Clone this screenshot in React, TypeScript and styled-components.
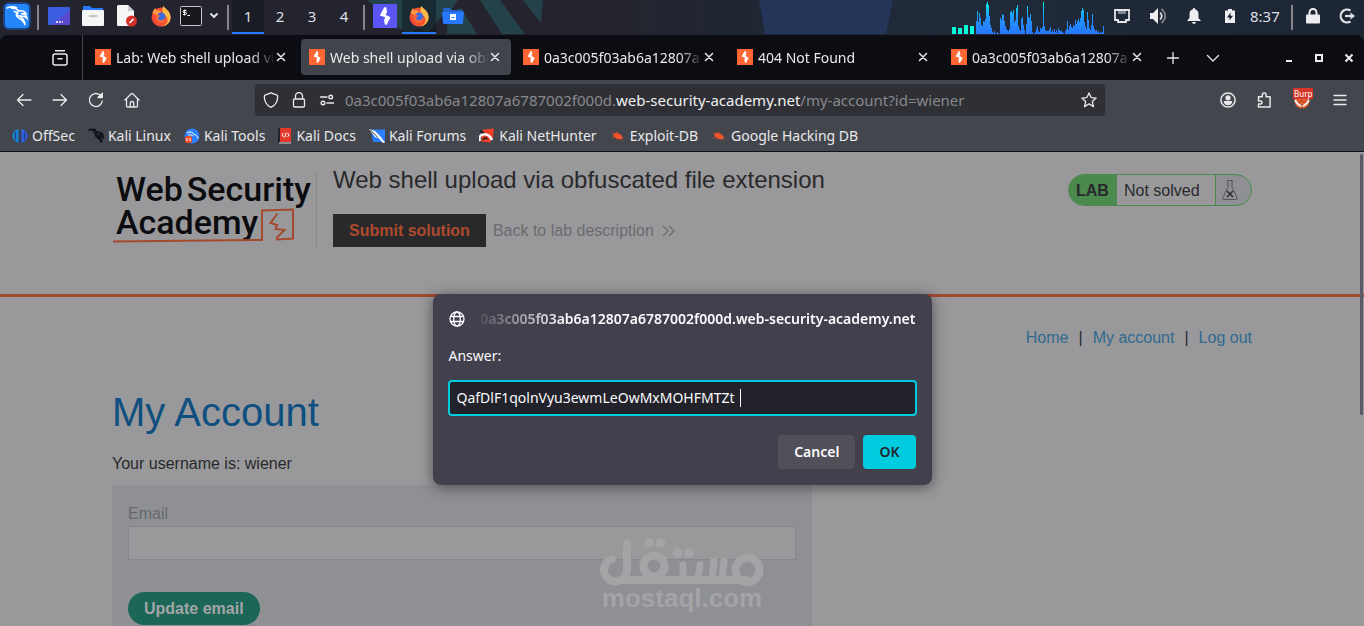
import React from "react";
import styled, { createGlobalStyle } from "styled-components";

const UI_FONT = '"Noto Sans", "DejaVu Sans", sans-serif';
const PAGE_FONT = '"Liberation Sans", Arial, sans-serif';

const GlobalStyle = createGlobalStyle`
  *, *::before, *::after { box-sizing: border-box; }
  body { margin: 0; background: #0c0d12; font-family: ${UI_FONT}; }
  button, input { font: inherit; }
  button { border: 0; padding: 0; background: none; color: inherit; }
  a { color: inherit; text-decoration: none; }
  h1, h2, p { margin: 0; font-weight: 400; }
  svg { display: block; flex: none; }
`;

const Desktop = styled.div`
  display: flex;
  flex-direction: column;
  height: 100vh;
  overflow: hidden;
  background: #1e2733;
`;

/* ---------- desktop panel ---------- */

const Panel = styled.header`
  position: relative;
  flex: none;
  display: flex;
  justify-content: space-between;
  height: 35px;
  padding-bottom: 1px;
  overflow: hidden;
  background: linear-gradient(90deg, #23242e 0%, #25242e 44%, #1e2733 56%, #202a3a 68%, #1d2634 100%);
`;

const Wallpaper = styled.svg`
  position: absolute;
  top: 0;
  left: 0;
`;

const PanelGroup = styled.div`
  position: relative;
  display: flex;
  align-items: stretch;
`;

const PanelButton = styled.button<{ $w?: number; $active?: boolean; $start?: boolean }>`
  display: flex;
  align-items: center;
  justify-content: ${(p) => (p.$start ? "flex-start" : "center")};
  width: ${(p) => p.$w ?? 34}px;
  padding: 0 2px;
  font-size: 15px;
  line-height: 20px;
  color: #dcdfe4;
  background: ${(p) => (p.$active ? "rgba(16, 20, 26, 0.5)" : "none")};
  border-bottom: 2px solid ${(p) => (p.$active ? "#2777ff" : "transparent")};
`;

const PanelSeparator = styled.span`
  width: 2px;
  height: 25px;
  margin: 5px 3px;
  background: #85868b;
`;

const Graph = styled.svg`
  align-self: flex-end;
`;

/* ---------- browser chrome ---------- */

const Browser = styled.div`
  flex: 1;
  min-height: 0;
  display: flex;
  flex-direction: column;
  overflow: hidden;
  border-radius: 8px 8px 0 0;
  background: #0c0d12;
  color: #e9e9eb;
  font-size: 14px;
  line-height: 20px;
`;

const TabBar = styled.div`
  flex: none;
  display: flex;
  align-items: stretch;
  height: 45px;
`;

const ViewButton = styled.button`
  display: flex;
  align-items: center;
  justify-content: flex-end;
  width: 83px;
  padding-right: 14px;
  border-right: 1px solid #45464b;
`;

const Tabs = styled.div`
  display: flex;
  gap: 4px;
  padding: 4px 4px 5px;
`;

const Tab = styled.div<{ $active?: boolean }>`
  display: flex;
  align-items: center;
  width: 210px;
  padding: 0 10px 0 8px;
  border-radius: 4px;
  background: ${(p) => (p.$active ? "#42444c" : "none")};
`;

const TabTitle = styled.span`
  flex: 1;
  min-width: 0;
  margin-left: 5px;
  padding-top: 2px;
  overflow: hidden;
  white-space: nowrap;
  mask-image: linear-gradient(90deg, #000 calc(100% - 24px), transparent);
`;

const IconButton = styled.button<{ $w: number }>`
  display: flex;
  flex: none;
  align-items: center;
  justify-content: center;
  width: ${(p) => p.$w}px;
`;

const WindowControls = styled.div`
  display: flex;
  margin-left: auto;
`;

const NavBar = styled.div`
  flex: none;
  display: flex;
  align-items: center;
  height: 40px;
  padding: 0 6px;
  background: #43464d;
`;

const NavGroup = styled.div<{ $end?: boolean }>`
  display: flex;
  flex: ${(p) => (p.$end ? "0 0 253px" : "0 0 249px")};
  justify-content: ${(p) => (p.$end ? "flex-end" : "flex-start")};
`;

const UrlBar = styled.div`
  flex: 1;
  min-width: 0;
  display: flex;
  align-items: center;
  height: 32px;
  padding: 0 2px;
  border-radius: 4px;
  background: #2f3035;
`;

const UrlText = styled.div`
  flex: 1;
  min-width: 0;
  padding-left: 4px;
  overflow: hidden;
  white-space: nowrap;
  font-size: 15px;
  color: #88898d;

  b { font-weight: 400; color: #f0f0f2; }
`;

const Bookmarks = styled.nav`
  flex: none;
  display: flex;
  align-items: center;
  gap: 13px;
  height: 32px;
  padding: 1px 12px 0;
  background: #43464d;
  border-bottom: 1px solid #101116;
`;

const Bookmark = styled.a`
  display: flex;
  align-items: center;
  gap: 4px;
  white-space: nowrap;
`;

/* ---------- web page ---------- */

const Viewport = styled.div`
  position: relative;
  flex: 1;
  min-height: 0;
  overflow: hidden;
  background: #99999b;
  color: #29292c;
  font-family: ${PAGE_FONT};
  font-size: 16px;
  line-height: 20px;
`;

const ScrollThumb = styled.span`
  position: absolute;
  top: 2px;
  right: 1px;
  width: 3px;
  height: 55%;
  border-radius: 2px;
  background: #5b5965;
`;

const Container = styled.div`
  max-width: 1140px;
  margin: 0 auto;
`;

const LabHeader = styled.div`
  height: 145px;
  border-bottom: 3px solid #a44a2e;

  ${Container} { display: flex; align-items: flex-start; }
`;

const Brand = styled.a`
  display: block;
  position: relative;
  width: 205px;
  height: 75px;
  margin-top: 21px;
  padding: 0 4px;
  border-right: 1px solid #88888b;
  color: #0c0c10;
  font-family: Roboto, sans-serif;
  font-weight: 500;
  font-size: 34px;
  line-height: 33px;
`;

const BrandLine = styled.span`
  display: flex;
  gap: 4px;
`;

const BrandMark = styled.svg`
  position: absolute;
  left: 0;
  top: 33px;
`;

const LabInfo = styled.div`
  flex: 1;
  margin: 14px 0 0 16px;
`;

const LabTitle = styled.h2`
  font-size: 24px;
  line-height: 28px;
`;

const LabActions = styled.div`
  display: flex;
  align-items: center;
  gap: 7px;
  margin-top: 20px;
`;

const SubmitButton = styled.button`
  height: 33px;
  padding: 0 16px;
  background: #29292b;
  color: #ad4a2e;
  font-weight: 700;
`;

const BackLink = styled.a`
  display: flex;
  align-items: center;
  gap: 8px;
  color: #6b6b6e;
`;

const LabStatus = styled.div`
  display: flex;
  align-items: stretch;
  width: 184px;
  height: 32px;
  margin-top: 22px;
  overflow: hidden;
  border: 1px solid #4b8a4c;
  border-radius: 16px;
  background: #8e9094;

  strong {
    width: 48px;
    padding: 6px 0 0 7px;
    background: #4b8a4c;
  }
  span {
    flex: 1;
    padding: 6px 0 0 7px;
    background: #99999b;
    border-right: 1px solid #4b8a4c;
  }
  svg { margin: 5px 13px 0 6px; }
`;

const PageNav = styled.nav`
  display: flex;
  justify-content: flex-end;
  gap: 10px;
  padding-top: 31px;

  a { color: #2f6a90; }
`;

const PageTitle = styled.h1`
  margin-top: 40px;
  color: #0f4f80;
  font-size: 40px;
  line-height: 48px;
`;

const Username = styled.p`
  margin-top: 18px;
`;

const EmailForm = styled.form`
  display: flex;
  flex-direction: column;
  align-items: flex-start;
  max-width: 700px;
  margin-top: 11px;
  padding: 19px 16px 32px;
  background: #8e9094;

  label { color: #68696d; }
  input {
    width: 100%;
    height: 34px;
    margin: 2px 0 32px;
    padding: 0 8px;
    border: 1px solid #87888b;
    background: #99999b;
    outline: none;
  }
`;

const UpdateButton = styled.button`
  height: 33px;
  padding: 0 16px;
  border-radius: 17px;
  background: #1b6657;
  color: #a3a5a6;
  font-weight: 700;
`;

const Watermark = styled.div`
  position: absolute;
  left: 0;
  right: 0;
  bottom: 16px;
  display: flex;
  flex-direction: column;
  align-items: center;
  color: #a4a4a7;
  font-weight: 700;
  font-size: 26px;
  line-height: 24px;
  pointer-events: none;
`;

/* ---------- prompt dialog ---------- */

const DialogLayer = styled.div`
  position: absolute;
  inset: 0;
  display: flex;
  align-items: flex-start;
  justify-content: center;
  padding-top: 142px;
`;

const Dialog = styled.form`
  width: 499px;
  max-width: 90%;
  padding: 16px;
  border-radius: 8px;
  background: #42404c;
  box-shadow: 0 2px 14px rgba(20, 20, 26, 0.55);
  color: #fbfbfe;
  font-family: ${UI_FONT};
  font-size: 14px;
  line-height: 18px;
`;

const DialogOrigin = styled.div`
  display: flex;
  align-items: center;
  gap: 6px;
  font-weight: 600;
`;

const OriginText = styled.span`
  flex: 1;
  min-width: 0;
  display: flex;
  justify-content: flex-end;
  overflow: hidden;
  white-space: nowrap;
  mask-image: linear-gradient(90deg, transparent, #000 96px);
`;

const DialogLabel = styled.label`
  display: block;
  margin-top: 19px;
`;

const Field = styled.div`
  position: relative;
  margin: 15px -1px 19px;
`;

const DialogInput = styled.input`
  display: block;
  width: 100%;
  height: 36px;
  padding: 0 7px 2px;
  border: 2px solid #00ccdf;
  border-radius: 4px;
  outline: none;
  background: #22222a;
  color: #fbfbfe;
  caret-color: transparent;
`;

const Caret = styled.span`
  position: absolute;
  top: 9px;
  left: 292px;
  width: 1px;
  height: 18px;
  background: #fbfbfe;
`;

const DialogActions = styled.div`
  display: flex;
  justify-content: flex-end;
  gap: 8px;
`;

const DialogButton = styled.button<{ $primary?: boolean }>`
  height: 34px;
  padding: 0 16px;
  border-radius: 4px;
  background: ${(p) => (p.$primary ? "#00ccdf" : "#514f58")};
  color: ${(p) => (p.$primary ? "#24242e" : "#fbfbfe")};
  font-weight: 600;
`;

/* ---------- drawings ---------- */

const line = {
  fill: "none",
  stroke: "currentColor",
  strokeWidth: 1.3,
  strokeLinecap: "round" as const,
  strokeLinejoin: "round" as const,
};

const BurpIcon = ({ size = 16, color = "#ff6633" }) => (
  <svg width={size} height={size} viewBox="0 0 16 16">
    <rect width="16" height="16" fill={color} />
    <path d="M8.800 2.200H7.500L4.600 7.600l3.600 1.200-.8 1.800.5 3.200h1.200l2.600-5-3.300-1.700 1-1.800z" fill="#fff" />
  </svg>
);

const CloseIcon = () => (
  <svg width="12" height="12" viewBox="0 0 12 12" {...line} strokeWidth={1.5}>
    <path d="M2.500 2.500l7 7M9.500 2.500l-7 7" />
  </svg>
);

const FirefoxIcon = () => (
  <svg width="22" height="22" viewBox="0 0 22 22">
    <circle cx="11" cy="12" r="9.4" fill="#f4502f" />
    <path d="M13.5.8c.8 3 6.800 4.600 7.200 11.200.2 5-4 9.400-9.200 9.400 4.800-1 7-4.600 5.600-8.400-.8-2.400-4-3.500-4.600-6.600-.3-2 .1-4.200 1-5.600z" fill="#ffb84a" />
    <path d="M2.600 8C3 5.600 4.200 4 5.400 3c0 1 .4 1.800 1 2.400 2-.5 3.400.1 4.600 1.200L9 9.600 6 10z" fill="#ff9640" />
    <circle cx="11.200" cy="11.800" r="4.200" fill="#3a6be0" />
    <path d="M6 10.200c2-.6 3.400-.2 4.600.6-1.200 1-2 1-2.400 2-.4 1.600 1.600 3 4 2.200 1.400-.4 2.200-1.200 3-2-.2 3.400-2.600 5-5 4.800-3.400-.3-5-4-4.200-7.600z" fill="#ff6a38" />
    <path d="M1.800 11.500c.4 5 4 9.700 9.400 9.900-5 .4-9.400-4-9.600-8z" fill="#c92c57" />
  </svg>
);

const DragonPath =
  "M1 3c3-1.500 7-1.600 10 0-2.500-.4-4.500-.2-6 .3 3-.2 6 .5 8 2.700M13 6c2.600-.6 5.600.3 7 2.500-1.700-.6-3-.4-4 .2 2.300.4 4.500 2 5 4.600-2-2.200-5-2.600-7.400-2.300-3-.1-4.200-2.600-.6-5M8 6.500c1.500 0 3 .6 4 1.700M13.500 11c2 1.500 5.500 3 5.500 9-1-4-3.500-5.400-6-6.800-2-1.200-3.200-3.200-2.400-5.600";

const KaliMenuIcon = () => (
  <svg width="30" height="30" viewBox="0 0 30 30">
    <rect x="1" y="1" width="28" height="28" rx="6" fill="#1a5cc8" opacity=".55" />
    <rect x="3" y="3" width="24" height="24" rx="4" fill="#2387fb" />
    <path d={DragonPath} transform="translate(4 4)" fill="none" stroke="#fff" strokeWidth="1.500" strokeLinecap="round" />
  </svg>
);

const Dragon = ({ color, size = 16 }: { color: string; size?: number }) => (
  <svg width={size} height={size} viewBox="0 0 22 22">
    <path d={DragonPath} fill="none" stroke={color} strokeWidth="2" strokeLinecap="round" />
  </svg>
);

const TerminalIcon = () => (
  <svg width="22" height="20" viewBox="0 0 22 20">
    <rect x=".5" y=".5" width="21" height="19" rx="1" fill="#16171a" stroke="#c8c9cc" />
    <path d="M6.500 4.500H4q-1 0-1 1t1 1h1.500q1 0 1 1t-1 1H3M4.700 3.500v6M7.500 9.500H10" fill="none" stroke="#fff" />
  </svg>
);

const bigBars = [7, 6, 9, 8];
const smallBars = [
  13, 23, 12, 21, 16, 9, 8, 13, 12, 15, 30, 32, 29, 18, 9, 6, 2, 1, 3, 1, 0, 2, 1, 0, 16, 14, 20, 19, 13, 8, 5, 4, 3,
  5, 22, 23, 21, 24, 12, 14, 26, 29, 8, 5, 3, 15, 17, 9, 4, 0, 10, 28, 17, 16, 20, 13, 2, 0, 1, 2, 5, 8, 3, 2, 6, 5,
  7, 32, 8, 4, 3, 3, 3, 5, 7, 2, 4, 2, 5, 2, 4, 1, 6, 4, 3, 3, 2, 1, 0, 3, 5, 13, 4, 8, 10, 7, 6, 9, 8, 14, 10, 13,
  15, 12, 16, 23, 26, 24, 12, 8, 5, 22, 14, 6, 4, 9, 20, 8, 5, 3, 4, 2, 3, 1, 2, 1, 2, 8,
];

const CpuGraph = () => (
  <Graph width="154" height="34" viewBox="0 0 154 34">
    <defs>
      <linearGradient id="load" x1="0" y1="0" x2="0" y2="34" gradientUnits="userSpaceOnUse">
        <stop offset="0" stopColor="#00ffd8" />
        <stop offset=".5" stopColor="#2296ff" />
        <stop offset="1" stopColor="#2777ff" />
      </linearGradient>
    </defs>
    {bigBars.map((h, i) => (
      <rect key={i} x={2 + i * 6} y={34 - h} width="4" height={h} fill="#00ffd8" />
    ))}
    <path d={smallBars.map((h, i) => `M${26 + i} 34v${-h}h1v${h}z`).join("")} fill="url(#load)" />
  </Graph>
);

const labHost = "0a3c005f03ab6a12807a6787002f000d";

const tabs = [
  { title: "Lab: Web shell upload vi" },
  { title: "Web shell upload via obf", active: true },
  { title: "0a3c005f03ab6a12807a" },
  { title: "404 Not Found" },
  { title: "0a3c005f03ab6a12807a" },
];

const ExploitIcon = () => (
  <svg width="16" height="16" viewBox="0 0 16 16">
    <path d="M3 6l3.500-1.500 4 2 2.500 3-1.500 2-4-.5L4 9z" fill="#f4552c" />
    <path d="M2 4.500l3 1.500M8 3.500v2M1.500 10l3-1M6 12l1-1M12 6l-1 1M14 8.500L13 9.500M13 12l1 1" stroke="#a8432b" fill="none" />
  </svg>
);

const bookmarks = [
  {
    name: "OffSec",
    icon: (
      <svg width="16" height="16" viewBox="0 0 16 16">
        <path d="M6.500 1v14C2.500 13.500.5 11 .5 8s2-6 6-7z" fill="#1784d4" />
        <path d="M9.500 1v14c4-1.500 6-4 6-7s-2-6-6-7z" fill="#2f62e6" />
        <path d="M3.500 4v8M8 3v12M12.500 4v8" stroke="#283a78" strokeWidth="1.200" />
      </svg>
    ),
  },
  { name: "Kali Linux", icon: <Dragon color="#101116" /> },
  {
    name: "Kali Tools",
    icon: (
      <svg width="16" height="16" viewBox="0 0 16 16">
        <circle cx="8" cy="8" r="7.500" fill="#2a7fff" />
        <path d="M3 4.500c4-1 6 0 7 2 2 0 3.500 1.500 4 4M4 7c2-.5 4 0 5 1" fill="none" stroke="#fff" />
        <rect x="1" y="8" width="7" height="7" rx="2" fill="#ee4d2e" />
        <path d="M3 10v3M6 10v3" stroke="#fff" />
      </svg>
    ),
  },
  {
    name: "Kali Docs",
    icon: (
      <svg width="14" height="16" viewBox="0 0 14 16">
        <rect width="2" height="15" fill="#20242e" />
        <rect x="2" width="11" height="14" fill="#e5382c" />
        <path d="M5.500 5L4 7l1.500 2M9.500 5L11 7 9.500 9M8.200 4.500l-1.400 5" fill="none" stroke="#fff" />
        <path d="M1 15h12" stroke="#d8d8da" />
      </svg>
    ),
  },
  {
    name: "Kali Forums",
    icon: (
      <svg width="16" height="16" viewBox="0 0 16 16">
        <path d="M2 1.500h14V14H4z" fill="#2a7fff" />
        <path d="M0 1l6 2 5 5 5 6.500-2 .5-4.500-5L6 9z" fill="#fff" />
        <path d="M1.500 2l7 7" stroke="#333" />
      </svg>
    ),
  },
  {
    name: "Kali NetHunter",
    icon: (
      <svg width="16" height="16" viewBox="0 0 16 16">
        <path d="M4 1.500l11-1-1 9-3 5-9-1z" fill="#ee3f2b" />
        <path d="M1 13c-1.500-3 0-6 3-6.500C8 5.800 11 8 13 12" fill="none" stroke="#fff" strokeWidth="2.500" />
        <path d="M4 12c1-2.500 3-2.500 4.500-1M1 3l4 2" fill="none" stroke="#1b1c20" strokeWidth="1.500" />
      </svg>
    ),
  },
  { name: "Exploit-DB", icon: <ExploitIcon /> },
  { name: "Google Hacking DB", icon: <ExploitIcon /> },
];

export default function App() {
  return (
    <Desktop>
      <GlobalStyle />
      <Panel>
        <Wallpaper width="1364" height="34" viewBox="0 0 1364 34" aria-hidden="true">
          <path d="M368 0h90l-6 9 23 25h-48l-8-6-10 6-22-14z" fill="#23424a" />
          <path d="M446 12l-20 22h56z" fill="#25242e" />
          <path d="M458 0h22l24 34h-22l-32-22z" fill="#25242e" />
          <path d="M448 14l13-6 16 26h-30z" fill="#23424a" />
          <path d="M480 0h20l25 34h-23zM523 0h20l-2 23z" fill="#23424a" />
          <path d="M759 0h134l-7 34H765z" fill="#25355a" />
        </Wallpaper>
        <PanelGroup>
          <PanelButton aria-label="Applications"><KaliMenuIcon /></PanelButton>
          <PanelSeparator />
          <PanelButton aria-label="Show desktop">
            <svg width="22" height="18" viewBox="0 0 22 18">
              <rect width="22" height="18" rx="1" fill="#3c5ee0" />
              <path d="M22 3v15H4z" fill="#5848cf" />
              <path d="M8 15h2M11 15h2M14 15h1" stroke="#fff" strokeWidth="1.500" />
            </svg>
          </PanelButton>
          <PanelButton aria-label="Files">
            <svg width="22" height="20" viewBox="0 0 22 20">
              <path d="M1 1q0-1 1-1h6l2 2h11v5H1z" fill="#2777ff" />
              <path d="M0 5q0-1 1-1h9l2 0h9q1 0 1 1v14q0 1-1 1H1q-1 0-1-1z" fill="#f4f5f7" />
              <path d="M7.500 10h7" stroke="#c2c3c6" strokeWidth="1.800" strokeLinecap="round" />
            </svg>
          </PanelButton>
          <PanelButton aria-label="Text editor">
            <svg width="20" height="22" viewBox="0 0 20 22">
              <path d="M1 0h10l6 6v15H1q-1 0-1-1V1z" fill="#f6f6f7" />
              <path d="M11 0l6 6h-6z" fill="#c9cacd" />
              <circle cx="14.500" cy="16" r="5.500" fill="#d33029" />
              <path d="M12.500 18l4-4" stroke="#fff" strokeWidth="1.600" />
            </svg>
          </PanelButton>
          <PanelButton aria-label="Firefox"><FirefoxIcon /></PanelButton>
          <PanelButton $w={26} aria-label="Terminal"><TerminalIcon /></PanelButton>
          <PanelButton $w={20} aria-label="More launchers">
            <svg width="10" height="8" viewBox="0 0 10 8" {...line} strokeWidth={2}><path d="M2 2l3 3 3-3" /></svg>
          </PanelButton>
          <PanelSeparator />
          {["1", "2", "3", "4"].map((n) => (
            <PanelButton key={n} $w={32} $active={n === "1"}>{n}</PanelButton>
          ))}
          <PanelSeparator />
          <PanelButton aria-label="Burp Suite"><BurpIcon size={24} color="#5a55f4" /></PanelButton>
          <PanelButton $active aria-label="Firefox window"><FirefoxIcon /></PanelButton>
          <PanelButton aria-label="Files window">
            <svg width="22" height="16" viewBox="0 0 22 16">
              <path d="M1 1q0-1 1-1h6l2 2h10q1 0 1 1v4H1z" fill="#2362c8" />
              <path d="M0 4h22l-1 11q0 1-1 1H2q-1 0-1-1z" fill="#2777ff" />
              <rect x="8" y="6" width="6" height="6" fill="#fff" />
              <path d="M9.500 9.500h3" stroke="#2777ff" />
            </svg>
          </PanelButton>
        </PanelGroup>
        <PanelGroup>
          <CpuGraph />
          <PanelButton $w={36} aria-label="Network">
            <svg width="16" height="14" viewBox="0 0 16 14">
              <path d="M1 1h14v10h-3v2H4v-2H1z" fill="none" stroke="#e6e6e8" strokeWidth="1.800" />
              <path d="M5 2v3M7 2v3M9 2v3M11 2v3" stroke="#e6e6e8" />
            </svg>
          </PanelButton>
          <PanelButton $w={36} aria-label="Volume">
            <svg width="18" height="16" viewBox="0 0 18 16">
              <path d="M1 5h3l5-5v16l-5-5H1z" fill="#eeeef0" />
              <path d="M11 4.500q3.500 3.500 0 7" fill="none" stroke="#eeeef0" strokeWidth="1.600" />
              <path d="M12.500 1q7.500 7 0 14" fill="none" stroke="#7c8189" strokeWidth="1.800" />
            </svg>
          </PanelButton>
          <PanelButton $w={36} aria-label="Notifications">
            <svg width="14" height="16" viewBox="0 0 14 16" fill="#eeeef0">
              <path d="M7 0q1.200 0 1.200 1.300Q11.500 2.300 11.500 6v4l2.500 3H0l2.500-3V6q0-3.700 3.300-4.700Q5.800 0 7 0zM5 14h4q-.5 2-2 2t-2-2z" />
            </svg>
          </PanelButton>
          <PanelButton $w={36} aria-label="Battery">
            <svg width="10" height="14" viewBox="0 0 10 14">
              <path d="M3 0h4v1.500h3V14H0V1.500h3z" fill="#eeeef0" />
              <path d="M5.500 3.500L2 8.500h2.500v3L8 6.800H5.500z" fill="#1e2733" />
            </svg>
          </PanelButton>
          <PanelButton $w={40} $start>8:37</PanelButton>
          <PanelSeparator />
          <PanelButton aria-label="Lock">
            <svg width="14" height="16" viewBox="0 0 14 16">
              <path d="M3.500 8V4.500a3.500 3.500 0 0 1 7 0V8" fill="none" stroke="#eeeef0" strokeWidth="2" />
              <rect y="6.500" width="14" height="9" rx="1" fill="#eeeef0" />
            </svg>
          </PanelButton>
          <PanelButton aria-label="Log out">
            <svg width="16" height="16" viewBox="0 0 16 16" fill="none" stroke="#e2e3e5" strokeWidth="2.200">
              <path d="M11.500 2.600A6.400 6.400 0 1 0 11.500 13.400" />
              <path d="M6 8h7" />
              <path d="M11.500 4.500L16 8l-4.500 3.500z" fill="#e2e3e5" stroke="none" />
            </svg>
          </PanelButton>
        </PanelGroup>
      </Panel>

      <Browser>
        <TabBar>
          <ViewButton aria-label="Firefox view">
            <svg width="16" height="16" viewBox="0 0 16 16" {...line} strokeWidth={1.5}>
              <path d="M3.500 .8h9M3 4h10q2 0 2 2v7q0 2-2 2H3q-2 0-2-2V6q0-2 2-2zM6 8.800h4" />
            </svg>
          </ViewButton>
          <Tabs role="tablist">
            {tabs.map((tab, i) => (
              <Tab key={i} role="tab" aria-selected={!!tab.active} $active={tab.active}>
                <BurpIcon />
                <TabTitle>{tab.title}</TabTitle>
                <IconButton $w={12} aria-label="Close tab"><CloseIcon /></IconButton>
              </Tab>
            ))}
          </Tabs>
          <IconButton $w={32} aria-label="New tab">
            <svg width="14" height="14" viewBox="0 0 14 14" {...line}><path d="M7 1.500v11M1.500 7h11" /></svg>
          </IconButton>
          <IconButton $w={48} aria-label="List all tabs">
            <svg width="14" height="14" viewBox="0 0 14 14" {...line}><path d="M1.500 4.500L7 10l5.500-5.500" /></svg>
          </IconButton>
          <WindowControls>
            <IconButton $w={30} aria-label="Minimize">
              <svg width="10" height="10" viewBox="0 0 10 10"><path d="M2 8h6" stroke="#eee" strokeWidth="2" /></svg>
            </IconButton>
            <IconButton $w={30} aria-label="Maximize">
              <svg width="10" height="10" viewBox="0 0 10 10"><rect x="2" y="2" width="6" height="6" fill="none" stroke="#eee" strokeWidth="2" /></svg>
            </IconButton>
            <IconButton $w={30} aria-label="Close window">
              <svg width="10" height="10" viewBox="0 0 10 10"><path d="M1.500 1.500l7 7M8.500 1.500l-7 7" stroke="#eee" strokeWidth="2" /></svg>
            </IconButton>
          </WindowControls>
        </TabBar>

        <NavBar>
          <NavGroup>
            <IconButton $w={36} aria-label="Back">
              <svg width="16" height="16" viewBox="0 0 16 16" {...line}><path d="M15 8H1.500M7 2.500L1.500 8 7 13.500" /></svg>
            </IconButton>
            <IconButton $w={36} aria-label="Forward">
              <svg width="16" height="16" viewBox="0 0 16 16" {...line}><path d="M1 8h13.500M9 2.500L14.500 8 9 13.500" /></svg>
            </IconButton>
            <IconButton $w={36} aria-label="Reload">
              <svg width="16" height="16" viewBox="0 0 16 16" {...line}>
                <path d="M14.300 9A6.500 6.500 0 1 1 12 3" />
                <path d="M14.300 1.200V5.500H10z" fill="currentColor" />
              </svg>
            </IconButton>
            <IconButton $w={36} aria-label="Home">
              <svg width="16" height="16" viewBox="0 0 16 16" {...line}>
                <path d="M1 8l6.300-6.300q.7-.6 1.400 0L15 8M2.500 6.800V14q0 1 1 1h9q1 0 1-1V6.800M6.300 15v-4.200q0-1.300 1.700-1.300t1.700 1.300V15" />
              </svg>
            </IconButton>
          </NavGroup>
          <UrlBar>
            <IconButton $w={28} aria-label="Tracking protection">
              <svg width="16" height="16" viewBox="0 0 16 16" {...line}>
                <path d="M8 .8l6 2.400q.7.300.7 1C14.700 9.500 12 13.500 8 15.300 4 13.500 1.300 9.500 1.300 4.200q0-.7.7-1z" />
              </svg>
            </IconButton>
            <IconButton $w={28} aria-label="Connection secure">
              <svg width="16" height="16" viewBox="0 0 16 16" {...line}>
                <path d="M4.500 7V4a3.500 3.500 0 0 1 7 0v3M3.500 7h9q1 0 1 1v6q0 1-1 1h-9q-1 0-1-1V8q0-1 1-1z" />
              </svg>
            </IconButton>
            <IconButton $w={28} aria-label="Permissions">
              <svg width="16" height="16" viewBox="0 0 16 16" {...line} strokeWidth={1.4}>
                <path d="M1.500 5H8M8 11h6.500" />
                <circle cx="11.700" cy="5" r="1.800" />
                <circle cx="4" cy="11" r="1.800" />
              </svg>
            </IconButton>
            <UrlText role="textbox" aria-label="Address" tabIndex={0}>
              {labHost}.<b>web-security-academy.net</b>/my-account?id=wiener
            </UrlText>
            <IconButton $w={28} aria-label="Bookmark this page">
              <svg width="16" height="16" viewBox="0 0 16 16" {...line}>
                <path d="M8 .9l2.100 4.700 5.100.5-3.900 3.400 1.200 5.100L8 11.900l-4.500 2.700 1.200-5.100L.8 6.100l5.100-.5z" />
              </svg>
            </IconButton>
          </UrlBar>
          <NavGroup $end>
            <IconButton $w={36} aria-label="Account">
              <svg width="16" height="16" viewBox="0 0 16 16" {...line} strokeWidth={1.5}>
                <circle cx="8" cy="8" r="7.100" />
                <circle cx="8" cy="5.800" r="1.900" fill="currentColor" />
                <path d="M4.500 9.800h7q-.8 2.700-3.500 2.700T4.500 9.800z" fill="currentColor" />
              </svg>
            </IconButton>
            <IconButton $w={38} aria-label="Extensions">
              <svg width="16" height="16" viewBox="0 0 16 16" {...line} strokeWidth={1.5}>
                <path d="M1.500 7V4.800h3.800V3q0-2 1.900-2t1.900 2v1.800h4V15H1.500v-3h2q1.500 0 1.500-1.500T3.500 9H1.500z" />
              </svg>
            </IconButton>
            <IconButton $w={38} aria-label="Burp extension">
              <svg width="20" height="24" viewBox="0 0 20 24">
                <circle cx="9" cy="13" r="7.500" fill="#e8612f" />
                <path d="M2 12q7 12 14 0" fill="none" stroke="#f6f0ee" strokeWidth="2" />
                <path d="M5 12.500l2 2 2-2.500 2 2.500 2-2M9 16v4" fill="none" stroke="#a83a20" />
                <rect width="20" height="11" rx="1" fill="#d7342a" />
                <text x="1" y="9" fill="#fff" fontFamily="Noto Sans, sans-serif" fontSize="8">Burp</text>
              </svg>
            </IconButton>
            <IconButton $w={36} aria-label="Menu">
              <svg width="14" height="12" viewBox="0 0 14 12" {...line}><path d="M1 1.500h12M1 6h12M1 10.500h12" /></svg>
            </IconButton>
          </NavGroup>
        </NavBar>

        <Bookmarks>
          {bookmarks.map((b) => (
            <Bookmark key={b.name} href="#">{b.icon}{b.name}</Bookmark>
          ))}
        </Bookmarks>

        <Viewport>
          <LabHeader>
            <Container>
              <Brand href="#">
                <BrandLine><span>Web</span><span>Security</span></BrandLine>
                <BrandLine><span>Academy</span></BrandLine>
                <BrandMark width="184" height="40" viewBox="0 0 184 40" fill="none" stroke="#a44a2e" strokeWidth="2">
                  <path d="M1 35.500l149-1.500V4.500l31-1v29l-16 1v-2l7.500-7.500-9-1 1.500-4-6.500-2 7-9.500" />
                </BrandMark>
              </Brand>
              <LabInfo>
                <LabTitle>Web shell upload via obfuscated file extension</LabTitle>
                <LabActions>
                  <SubmitButton>Submit solution</SubmitButton>
                  <BackLink href="#">
                    Back to lab description
                    <svg width="13" height="12" viewBox="0 0 13 12" fill="none" stroke="#6b6b6e" strokeWidth="1.200">
                      <path d="M1 1l5 5-5 5M7 1l5 5-5 5" />
                    </svg>
                  </BackLink>
                </LabActions>
              </LabInfo>
              <LabStatus>
                <strong>LAB</strong>
                <span>Not solved</span>
                <svg width="16" height="20" viewBox="0 0 16 20" fill="none" stroke="#55565a">
                  <path d="M5 .5h6M6 .5V7L.6 18.500q-.2 1 .9 1h13q1.100 0 .9-1L10 7V.5" />
                  <path d="M5 11l6 6M11 11l-6 6" stroke="#29292c" strokeWidth="1.400" />
                </svg>
              </LabStatus>
            </Container>
          </LabHeader>
          <Container>
            <PageNav>
              <a href="#">Home</a><span>|</span><a href="#">My account</a><span>|</span><a href="#">Log out</a>
            </PageNav>
            <PageTitle>My Account</PageTitle>
            <Username>Your username is: wiener</Username>
            <EmailForm onSubmit={(e) => e.preventDefault()}>
              <label htmlFor="email">Email</label>
              <input id="email" type="email" />
              <UpdateButton type="submit">Update email</UpdateButton>
            </EmailForm>
          </Container>

          <Watermark>
            <svg width="164" height="48" viewBox="0 0 164 48" fill="none" stroke="#a4a4a7" strokeWidth="8" strokeLinecap="round" role="img" aria-label="مستقل">
              <path d="M12 21A11.500 11.500 0 1 0 27 32V5M20 42H147" />
              <circle cx="54" cy="28" r="10.500" />
              <circle cx="147.500" cy="32" r="12" />
              <path d="M83 40V27M98 40l2-13M112 40l2-17M122 40l2-17" strokeWidth="7" />
              <g fill="#a4a4a7" stroke="none">
                <circle cx="49" cy="5" r="5" />
                <circle cx="60.500" cy="5" r="5" />
                <circle cx="77.500" cy="15" r="5" />
                <circle cx="89" cy="15" r="5" />
              </g>
            </svg>
            <span>mostaql.com</span>
          </Watermark>
          <ScrollThumb />

          <DialogLayer>
            <Dialog role="dialog" aria-modal="true" onSubmit={(e) => e.preventDefault()}>
              <DialogOrigin>
                <svg width="16" height="16" viewBox="0 0 16 16" {...line}>
                  <circle cx="8" cy="8" r="7" />
                  <ellipse cx="8" cy="8" rx="3.300" ry="7" />
                  <path d="M1.700 5.500h12.600M1.700 10.500h12.600" />
                </svg>
                <OriginText>{labHost}.web-security-academy.net</OriginText>
              </DialogOrigin>
              <DialogLabel htmlFor="answer">Answer:</DialogLabel>
              <Field>
                <DialogInput id="answer" defaultValue="QafDlF1qolnVyu3ewmLeOwMxMOHFMTZt " />
                <Caret />
              </Field>
              <DialogActions>
                <DialogButton type="button">Cancel</DialogButton>
                <DialogButton type="submit" $primary>OK</DialogButton>
              </DialogActions>
            </Dialog>
          </DialogLayer>
        </Viewport>
      </Browser>
    </Desktop>
  );
}
